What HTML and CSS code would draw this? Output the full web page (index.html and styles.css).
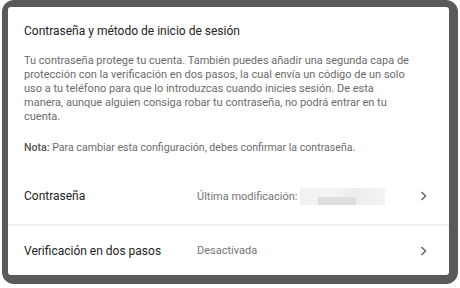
FILE: index.html
```html
<!DOCTYPE html>
<html lang="es">
<head>
<meta charset="utf-8">
<title>Contraseña y método de inicio de sesión</title>
<link rel="stylesheet" href="styles.css">
</head>
<body>
<div class="frame">
  <div class="card">
    <section class="intro">
      <h1 class="title">Contraseña y método de inicio de sesión</h1>
      <p class="desc">Tu contraseña protege tu cuenta. También puedes añadir una segunda capa de protección con la verificación en dos pasos, la cual envía un código de un solo uso a tu teléfono para que lo introduzcas cuando inicies sesión. De esta manera, aunque alguien consiga robar tu contraseña, no podrá entrar en tu cuenta.</p>
      <p class="desc note"><b class="note-label">Nota:</b> Para cambiar esta configuración, debes confirmar la contraseña.</p>
    </section>
    <div class="row row-first">
      <span class="label">Contraseña</span>
      <span class="value">Última modificación: <span class="blur"></span></span>
      <svg class="chev" width="8" height="10" viewBox="0 0 8 10" aria-hidden="true"><path d="M1.5 1 L5.5 5 L1.5 9" fill="none" stroke="#666666" stroke-width="1.5"/></svg>
    </div>
    <div class="row row-last">
      <span class="label">Verificación en dos pasos</span>
      <span class="value">Desactivada</span>
      <svg class="chev" width="8" height="10" viewBox="0 0 8 10" aria-hidden="true"><path d="M1.5 1 L5.5 5 L1.5 9" fill="none" stroke="#666666" stroke-width="1.5"/></svg>
    </div>
  </div>
</div>
</body>
</html>
```
FILE: styles.css
```css
html, body {
  margin: 0;
  padding: 0;
  background: #ffffff;
}
body {
  width: 460px;
  height: 288px;
  overflow: hidden;
  font-family: Roboto, "Liberation Sans", Arial, sans-serif;
}
.frame {
  box-sizing: border-box;
  width: 456px;
  height: 284px;
  margin-left: 2px;
  border-style: solid;
  border-color: #5a5a5a;
  border-width: 7px 9px 9px 6px;
  border-radius: 12px;
  background: #5a5a5a;
  box-shadow: inset 0 0 0 1px #4c4c4c;
}
.card {
  height: 100%;
  background: #ffffff;
  border-radius: 3px;
  display: flex;
  flex-direction: column;
}
.intro {
  padding: 16px 0 0 16px;
}
.title {
  margin: 0;
  font-size: 12px;
  line-height: 16px;
  font-weight: 400;
  color: #222222;
}
.desc {
  max-width: 386px;
  margin: 15px 0 0;
  font-size: 11px;
  line-height: 14px;
  color: #6b6b6b;
}
.note {
  max-width: none;
  margin-top: 17px;
  font-size: 10.6px;
}
.note-label {
  font-weight: 500;
  color: #555555;
}
.row {
  display: flex;
  align-items: center;
  padding: 0 21px 0 16px;
}
.row-first {
  margin-top: auto;
  height: 48px;
  padding-bottom: 4px;
  border-bottom: 2px solid #eeeeee;
}
.row-last {
  height: 49px;
}
.label {
  width: 173px;
  flex: none;
  font-size: 12px;
  color: #222222;
}
.value {
  flex: 1;
  display: flex;
  align-items: center;
  gap: 2px;
  font-size: 11px;
  color: #757575;
}
.blur {
  width: 85px;
  height: 17px;
  background:
    linear-gradient(to right, transparent 0 18px, #dedede 18px 56px, transparent 56px) bottom / 100% 8px no-repeat,
    linear-gradient(to right, #f1f1f1, #f5f5f5 40%, #ececec 60%, #f3f3f3);
}
.chev {
  flex: none;
}
```
